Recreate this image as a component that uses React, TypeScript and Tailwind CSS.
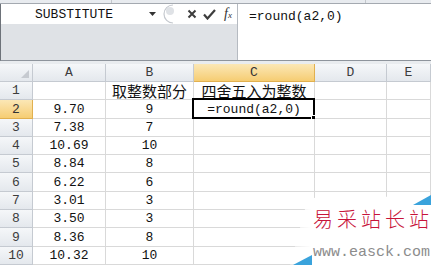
import React from "react";

const colWidths = [33, 73, 88, 121, 72, 44];
const rowHeights = [18, 18, 19, 18, 18, 18, 19, 18, 18, 19, 18];
const headers = ["", "A", "B", "C", "D", "E"];

const data: string[][] = [
  ["", "取整数部分", "四舍五入为整数"],
  ["9.70", "9", "=round(a2,0)"],
  ["7.38", "7", ""],
  ["10.69", "10", ""],
  ["8.84", "8", ""],
  ["6.22", "6", ""],
  ["3.01", "3", ""],
  ["3.50", "3", ""],
  ["8.36", "8", ""],
  ["10.32", "10", ""],
];

const isCjk = (s: string) => /[\u4e00-\u9fff]/.test(s);

const FormulaBar: React.FC = () => (
  <div>
    {/* ribbon edge */}
    <div className="h-[4px] bg-[#e8ebef] border-b border-[#a4a9b0] flex">
      <div className="w-[112px] border-r border-[#c3c7cc]" />
      <div className="w-[254px] border-r border-[#c3c7cc]" />
    </div>
    <div className="flex h-[57px] border-l border-[#6d7279] border-b border-b-[#8e949c]">
      <div className="w-[237px] flex flex-col border-r border-[#b5bac1]">
        <div className="h-[20px] bg-white flex items-center">
          <div className="w-[146px] text-center text-[13px] text-[#111] leading-none">SUBSTITUTE</div>
          <svg width="8" height="5" viewBox="0 0 8 5" className="ml-[2px]">
            <path d="M0 0 L7 0 L3.5 4 Z" fill="#333" />
          </svg>
          <svg width="12" height="20" viewBox="0 0 12 20" className="ml-[5px]">
            <path d="M11 1 A9 9 0 0 0 11 19" fill="none" stroke="#c4c8ce" strokeWidth="1.2" />
            <circle cx="8" cy="7" r="4" fill="#dfe2e6" />
          </svg>
          <svg width="10" height="10" viewBox="0 0 10 10" className="ml-[13px]">
            <path d="M1.5 1.5 L8.5 8.5 M8.5 1.5 L1.5 8.5" stroke="#3d3d3d" strokeWidth="2" />
          </svg>
          <svg width="13" height="11" viewBox="0 0 13 11" className="ml-[6px]">
            <path d="M1 5.5 L4.5 9.5 L12 1" fill="none" stroke="#3d3d3d" strokeWidth="2.2" />
          </svg>
          <span className="ml-[8px] text-[14px] italic text-[#333] leading-none font-['Liberation_Serif',serif]">
            f<span className="text-[9px]">x</span>
          </span>
        </div>
        <div className="flex-1 bg-[#dfe2e6]" />
      </div>
      <div className="flex-1 bg-white pl-[11px] pt-[3px] text-[13px] text-[#111] leading-[20px]">
        =round(a2,0)
      </div>
    </div>
    <div className="h-[3px] bg-[#e9ecef]" />
  </div>
);

const HeaderCell: React.FC<{ label: string; active?: boolean; corner?: boolean }> = ({ label, active, corner }) => (
  <div
    className={`relative flex items-center justify-center border-r border-b text-[13px] leading-none ${
      active
        ? "bg-gradient-to-b from-[#fbe7b5] to-[#f6cd72] border-[#e1b04f] text-[#333]"
        : "bg-gradient-to-b from-[#f5f7f9] to-[#e4e8ed] border-[#c5cad1] text-[#3c3c3c]"
    }`}
  >
    {label}
    {corner && (
      <svg width="8" height="8" viewBox="0 0 8 8" className="absolute right-[3px] bottom-[3px]">
        <path d="M8 0 L8 8 L0 8 Z" fill="#c6cad0" />
      </svg>
    )}
  </div>
);

const Sheet: React.FC = () => (
  <div
    className="grid"
    style={{
      gridTemplateColumns: colWidths.map((w) => `${w}px`).join(" "),
      gridTemplateRows: rowHeights.map((h) => `${h}px`).join(" "),
    }}
  >
    {headers.map((h, i) => (
      <HeaderCell key={`h${i}`} label={h} corner={i === 0} active={h === "C"} />
    ))}
    {data.map((row, r) => (
      <React.Fragment key={r}>
        <HeaderCell label={String(r + 1)} active={r === 1} />
        {[0, 1, 2, 3, 4].map((c) => {
          const v = row[c] ?? "";
          const selected = r === 1 && c === 2;
          return (
            <div
              key={c}
              className="relative flex items-center justify-center border-r border-b border-[#d9d9d9] text-[#111]"
            >
              <span
                className={
                  isCjk(v)
                    ? "text-[15px] leading-none font-['Noto_Sans_CJK_SC',sans-serif]"
                    : "text-[13px] leading-none"
                }
              >
                {v}
              </span>
              {selected && (
                <div className="absolute -left-[2px] -top-[2px] -right-[1px] -bottom-[1px] border-2 border-black">
                  <div className="absolute -right-[3px] -bottom-[3px] w-[5px] h-[5px] bg-black border border-white" />
                </div>
              )}
            </div>
          );
        })}
      </React.Fragment>
    ))}
  </div>
);

const Watermark: React.FC = () => (
  <div className="absolute left-[288px] top-[194px] w-[143px] h-[71px]">
    <svg width="143" height="71" viewBox="0 0 143 71" className="absolute left-0 top-0">
      <defs>
        <linearGradient id="fade" x1="0" x2="1" y1="0" y2="0">
          <stop offset="0" stopColor="#fff" stopOpacity="0.3" />
          <stop offset="0.15" stopColor="#fff" stopOpacity="1" />
        </linearGradient>
      </defs>
      <path d="M20 4 L143 2 L143 71 L2 71 Z" fill="url(#fade)" />
      <path d="M125 11 L143 1 L143 11 Z" fill="#3aa3dc" />
      <path d="M5 71 L24 61 L24 71 Z" fill="#3aa3dc" />
    </svg>
    <div className="absolute left-[25px] top-[15px] whitespace-nowrap text-[20px] leading-none tracking-[4px] text-[#c8143a] font-['Noto_Sans_CJK_SC',sans-serif] font-light">
      易采站长站
    </div>
    <div className="absolute left-[25px] top-[51px] whitespace-nowrap text-[15px] leading-none text-[#8c8c8c]">
      www.easck.com
    </div>
  </div>
);

export default function App() {
  return (
    <div className="relative w-[431px] h-[265px] overflow-hidden bg-white font-['Liberation_Mono',monospace]">
      <FormulaBar />
      <Sheet />
      <Watermark />
    </div>
  );
}
